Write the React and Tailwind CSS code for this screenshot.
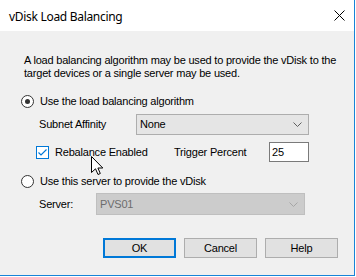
import React from "react";

const Chevron = ({ color }) => (
  <svg width="9" height="5" viewBox="0 0 9 5" className="shrink-0">
    <path d="M0.5 0.5 L4.5 4.5 L8.5 0.5" fill="none" stroke={color} strokeWidth="1" />
  </svg>
);

const Radio = ({ checked }) => (
  <span className="w-[13px] h-[13px] rounded-full border border-[#333333] bg-white flex items-center justify-center shrink-0">
    {checked && <span className="w-[5px] h-[5px] rounded-full bg-[#333333]" />}
  </span>
);

const Button = ({ children, primary }) => (
  <div
    className={
      "w-[73px] h-[20px] bg-[#e1e1e1] flex items-center justify-center " +
      (primary ? "border-2 border-[#0078d7]" : "border border-[#adadad]")
    }
  >
    {children}
  </div>
);

export default function App() {
  return (
    <div className="w-[356px] h-[277px] bg-white relative overflow-hidden text-black font-['Liberation_Sans',Arial,sans-serif] text-[11px] leading-[13px] tracking-[-0.2px]">
      <div className="w-[355px] h-[276px] border-r border-b border-[#1883d7] flex flex-col">
        {/* title bar */}
        <div className="h-[31px] bg-white flex items-center justify-between pl-[9px] pr-[9px] pt-[2px]">
          <span className="font-['Noto_Sans',sans-serif] text-[12px] tracking-[-0.3px] leading-[16px]">
            vDisk Load Balancing
          </span>
          <svg width="11" height="11" viewBox="0 0 11 11" className="mt-[-2px]">
            <path d="M0.5 0.5 L10.5 10.5 M10.5 0.5 L0.5 10.5" stroke="#000" strokeWidth="1" />
          </svg>
        </div>

        {/* body */}
        <div className="flex-1 bg-[#f0f0f0] pt-[23px] pl-[21px] flex flex-col">
          <p className="pl-[3px]">
            A load balancing algorithm may be used to provide the vDisk to the
            <br />
            target devices or a single server may be used.
          </p>

          <div className="mt-[15px] h-[13px] flex items-center gap-[6px]">
            <Radio checked />
            <span>Use the load balancing algorithm</span>
          </div>

          <div className="mt-[6px] h-[21px] flex items-center pl-[18px]">
            <span className="w-[97px]">Subnet Affinity</span>
            <div className="w-[173px] h-[21px] bg-[#e5e5e5] border border-[#adadad] flex items-center justify-between pl-[3px] pr-[6px]">
              <span>None</span>
              <Chevron color="#5f5f5f" />
            </div>
          </div>

          <div className="mt-[7px] h-[20px] flex items-center pl-[15px]">
            <span className="w-[13px] h-[13px] border border-[#0078d7] bg-white flex items-center justify-center shrink-0">
              <svg width="11" height="11" viewBox="0 0 11 11">
                <path d="M1.5 5.5 L4 8 L9.5 2.5" fill="none" stroke="#0078d7" strokeWidth="1.2" />
              </svg>
            </span>
            <span className="ml-[6px] w-[119px]">Rebalance Enabled</span>
            <span className="w-[95px]">Trigger Percent</span>
            <div className="w-[40px] h-[20px] bg-white border border-[#7a7a7a] flex items-center pl-[2px]">
              25
            </div>
          </div>

          <div className="mt-[13px] h-[13px] flex items-center gap-[6px]">
            <Radio />
            <span>Use this server to provide the vDisk</span>
          </div>

          <div className="mt-[5px] h-[22px] flex items-center pl-[18px]">
            <span className="w-[57px]">Server:</span>
            <div className="w-[209px] h-[22px] bg-[#cccccc] border border-[#bfbfbf] flex items-center justify-between pl-[3px] pr-[6px] text-[#6d6d6d]">
              <span>PVS01</span>
              <Chevron color="#a6a6a6" />
            </div>
          </div>

          <div className="mt-[23px] flex justify-end gap-[8px] pr-[16px]">
            <Button primary>OK</Button>
            <Button>Cancel</Button>
            <Button>Help</Button>
          </div>
        </div>
      </div>

      {/* mouse pointer */}
      <svg width="13" height="20" viewBox="0 0 13 20" className="absolute left-[91px] top-[156px]">
        <path
          d="M0.5 0.5 L0.5 16.5 L4.5 12.8 L7 18.5 L9.3 17.5 L6.9 12 L11.8 12 Z"
          fill="#fff"
          stroke="#000"
          strokeWidth="1"
          strokeLinejoin="miter"
        />
      </svg>
    </div>
  );
}
